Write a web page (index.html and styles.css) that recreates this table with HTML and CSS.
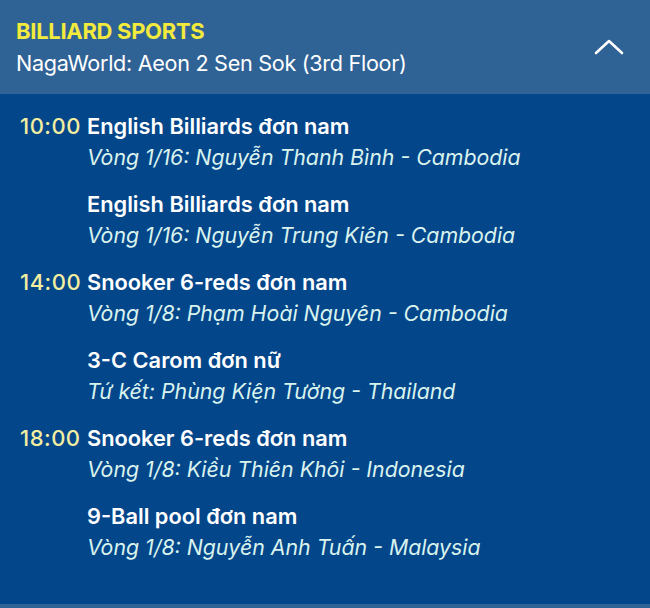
FILE: index.html
```html
<!DOCTYPE html>
<html>
<head>
<meta charset="utf-8">
<link rel="stylesheet" href="styles.css">
</head>
<body>
<div class="panel">
  <header class="head">
    <div class="head-text">
      <div class="sport">BILLIARD SPORTS</div>
      <div class="venue">NagaWorld: Aeon 2 Sen Sok (3rd Floor)</div>
    </div>
    <svg class="chev" width="32" height="18" viewBox="0 0 32 18"><path d="M3 15 L16 3 L29 15" fill="none" stroke="#fff" stroke-width="2.6" stroke-linecap="round" stroke-linejoin="round"/></svg>
  </header>
  <main class="list">
    <div class="row"><div class="time">10:00</div><div class="info"><div class="event">English Billiards đơn nam</div><div class="match">Vòng 1/16: Nguyễn Thanh Bình - Cambodia</div></div></div>
    <div class="row"><div class="time"></div><div class="info"><div class="event">English Billiards đơn nam</div><div class="match">Vòng 1/16: Nguyễn Trung Kiên - Cambodia</div></div></div>
    <div class="row"><div class="time">14:00</div><div class="info"><div class="event">Snooker 6-reds đơn nam</div><div class="match">Vòng 1/8: Phạm Hoài Nguyên - Cambodia</div></div></div>
    <div class="row"><div class="time"></div><div class="info"><div class="event">3-C Carom đơn nữ</div><div class="match">Tứ kết: Phùng Kiện Tường - Thailand</div></div></div>
    <div class="row"><div class="time">18:00</div><div class="info"><div class="event">Snooker 6-reds đơn nam</div><div class="match">Vòng 1/8: Kiều Thiên Khôi - Indonesia</div></div></div>
    <div class="row"><div class="time"></div><div class="info"><div class="event">9-Ball pool đơn nam</div><div class="match">Vòng 1/8: Nguyễn Anh Tuấn - Malaysia</div></div></div>
  </main>
  <div class="foot"></div>
</div>
</body>
</html>
```
FILE: styles.css
```css
html, body { margin: 0; padding: 0; }
body { width: 650px; height: 608px; overflow: hidden; background: #04468a; font-family: Inter, "Noto Sans", sans-serif; }
.panel { display: flex; flex-direction: column; height: 608px; }
.head { height: 94px; background: #2f6295; display: flex; align-items: center; justify-content: space-between; padding: 0 25px 0 16px; box-sizing: border-box; }
.head-text { display: flex; flex-direction: column; gap: 6px; margin-top: 0; }
.sport { color: #f2ea3c; font-weight: 700; font-size: 22px; line-height: 26px; letter-spacing: -0.3px; }
.venue { color: #ffffff; font-size: 21.6px; line-height: 26px; letter-spacing: -0.3px; }
.chev { margin-top: 0; }
.list { flex: 1; padding: 19px 0 0 20px; display: flex; flex-direction: column; }
.row { display: flex; height: 78px; }
.time { width: 67px; color: #f3eea0; font-size: 22px; font-weight: 500; line-height: 26px; letter-spacing: 0.5px; }
.info { display: flex; flex-direction: column; gap: 5px; }
.event { color: #ffffff; font-size: 21.8px; font-weight: 600; line-height: 26px; }
.match { color: #d9f3ee; font-size: 21.3px; font-style: italic; font-weight: 400; line-height: 26px; }
.foot { height: 4px; background: #2f6295; }
```
